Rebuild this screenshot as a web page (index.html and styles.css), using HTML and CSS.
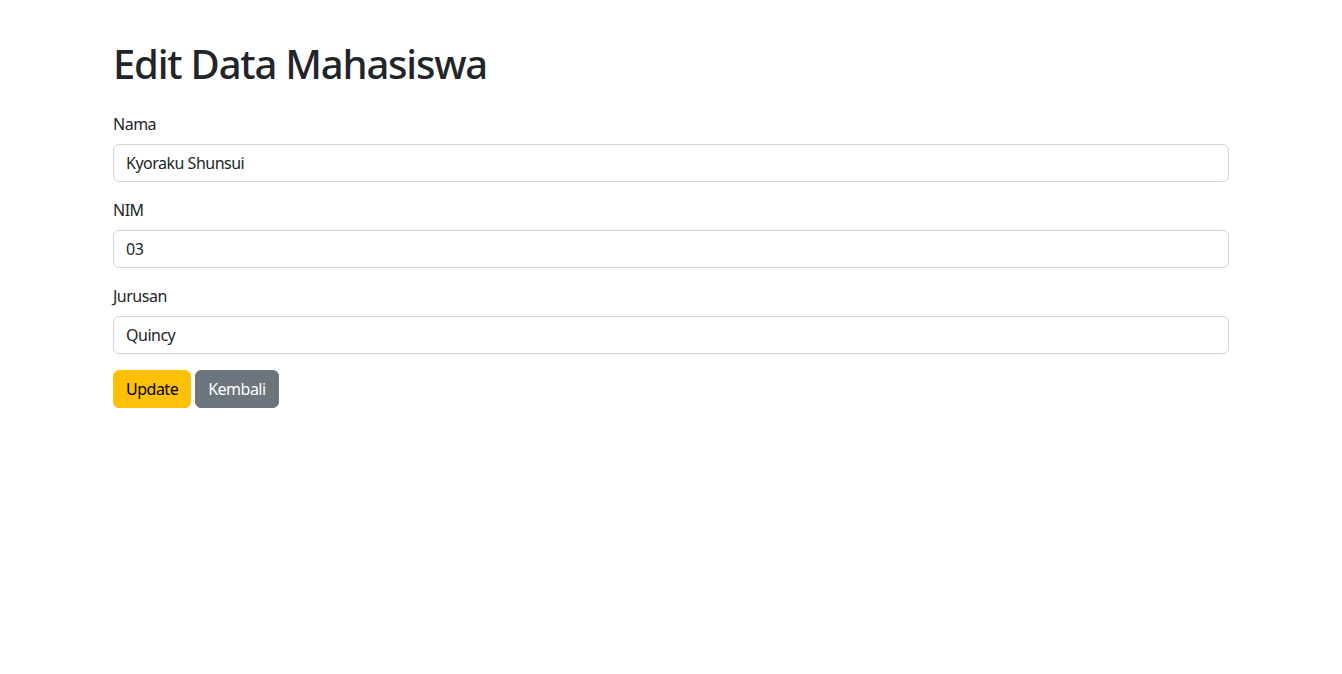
FILE: index.html
```html
<!DOCTYPE html>
<html lang="id">
<head>
<meta charset="utf-8">
<title>Edit Data Mahasiswa</title>
<link rel="stylesheet" href="styles.css">
</head>
<body>
<div class="container">
  <h1 class="title">Edit Data Mahasiswa</h1>
  <form class="form">
    <div class="group">
      <label class="label" for="nama">Nama</label>
      <input class="input" id="nama" type="text" value="Kyoraku Shunsui">
    </div>
    <div class="group">
      <label class="label" for="nim">NIM</label>
      <input class="input" id="nim" type="text" value="03">
    </div>
    <div class="group">
      <label class="label" for="jurusan">Jurusan</label>
      <input class="input" id="jurusan" type="text" value="Quincy">
    </div>
    <div class="actions">
      <button type="button" class="btn btn-warning">Update</button>
      <button type="button" class="btn btn-secondary">Kembali</button>
    </div>
  </form>
</div>
</body>
</html>
```
FILE: styles.css
```css
* { box-sizing: border-box; }
html, body { margin: 0; padding: 0; background: #fff; }
body {
  font-family: "Noto Sans", "Open Sans", sans-serif;
  font-size: 16px;
  line-height: 1.5;
  letter-spacing: -0.5px;
  color: #212529;
}
.container {
  max-width: 1140px;
  margin: 43px auto 0;
  padding: 0 12px;
}
.title {
  font-size: 40px;
  font-weight: 500;
  line-height: 42px;
  letter-spacing: -1.2px;
  margin: 0 0 27px;
}
.form { margin: 0; }
.group { margin-bottom: 16px; }
.label {
  display: block;
  margin-bottom: 8px;
  line-height: 24px;
}
.input {
  display: block;
  width: 100%;
  height: 38px;
  padding: 6px 12px;
  font: inherit;
  letter-spacing: inherit;
  color: #212529;
  background: #fff;
  border: 1px solid #ced4da;
  border-radius: 6px;
}
.actions { display: flex; gap: 4px; }
.btn {
  height: 38px;
  padding: 6px 12px;
  font: inherit;
  letter-spacing: inherit;
  line-height: 24px;
  border: 1px solid transparent;
  border-radius: 6px;
  cursor: pointer;
}
.btn-warning { background: #ffc107; border-color: #ffc107; color: #000; }
.btn-secondary { background: #6c757d; border-color: #6c757d; color: #fff; }
```
